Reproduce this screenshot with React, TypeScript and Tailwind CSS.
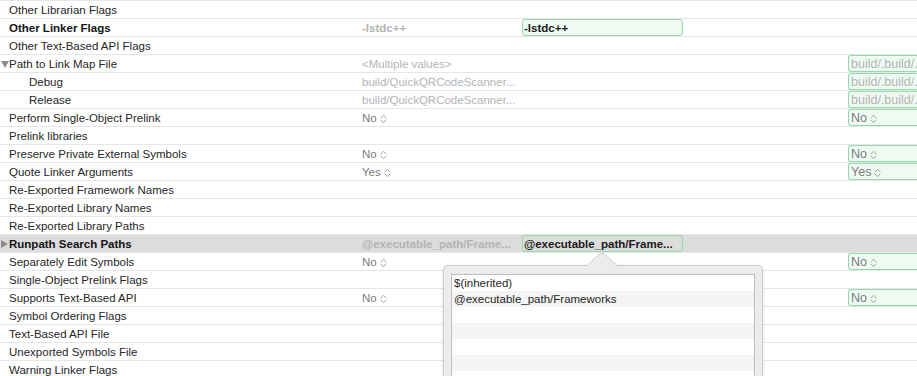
import React from 'react';

type Cell = { text: string; tone?: 'faint' | 'mid' | 'dark'; bold?: boolean; popup?: boolean };

interface Row {
  label: string;
  bold?: boolean;
  indent?: boolean;
  disclosure?: 'open' | 'closed';
  resolved?: Cell;
  target?: Cell;
  project?: Cell;
  selected?: boolean;
}

const rows: Row[] = [
  { label: 'Other Librarian Flags' },
  { label: 'Other Linker Flags', bold: true, resolved: { text: '-lstdc++', tone: 'faint', bold: true }, target: { text: '-lstdc++', tone: 'dark', bold: true } },
  { label: 'Other Text-Based API Flags' },
  { label: 'Path to Link Map File', disclosure: 'open', resolved: { text: '<Multiple values>', tone: 'faint' }, project: { text: 'build/.build/.build/', tone: 'faint' } },
  { label: 'Debug', indent: true, resolved: { text: 'build/QuickQRCodeScanner...', tone: 'faint' }, project: { text: 'build/.build/.build/', tone: 'faint' } },
  { label: 'Release', indent: true, resolved: { text: 'build/QuickQRCodeScanner...', tone: 'faint' }, project: { text: 'build/.build/.build/', tone: 'faint' } },
  { label: 'Perform Single-Object Prelink', resolved: { text: 'No', tone: 'mid', popup: true }, project: { text: 'No', tone: 'mid', popup: true } },
  { label: 'Prelink libraries' },
  { label: 'Preserve Private External Symbols', resolved: { text: 'No', tone: 'mid', popup: true }, project: { text: 'No', tone: 'mid', popup: true } },
  { label: 'Quote Linker Arguments', resolved: { text: 'Yes', tone: 'mid', popup: true }, project: { text: 'Yes', tone: 'mid', popup: true } },
  { label: 'Re-Exported Framework Names' },
  { label: 'Re-Exported Library Names' },
  { label: 'Re-Exported Library Paths' },
  { label: 'Runpath Search Paths', bold: true, disclosure: 'closed', selected: true, resolved: { text: '@executable_path/Frame...', tone: 'faint', bold: true }, target: { text: '@executable_path/Frame...', tone: 'dark', bold: true } },
  { label: 'Separately Edit Symbols', resolved: { text: 'No', tone: 'mid', popup: true }, project: { text: 'No', tone: 'mid', popup: true } },
  { label: 'Single-Object Prelink Flags' },
  { label: 'Supports Text-Based API', resolved: { text: 'No', tone: 'mid', popup: true }, project: { text: 'No', tone: 'mid', popup: true } },
  { label: 'Symbol Ordering Flags' },
  { label: 'Text-Based API File' },
  { label: 'Unexported Symbols File' },
  { label: 'Warning Linker Flags' },
];

const toneClass = {
  faint: 'text-[#b4b4b4]',
  mid: 'text-[#7b7b7b]',
  dark: 'text-[#1a1a1a]',
};

function UpDown({ className = '' }: { className?: string }) {
  return (
    <svg width="7" height="10" viewBox="0 0 7 10" className={className} fill="none" stroke="currentColor" strokeWidth="1" strokeLinecap="round" strokeLinejoin="round">
      <path d="M1 4 L3.5 1.3 L6 4" />
      <path d="M1 6 L3.5 8.7 L6 6" />
    </svg>
  );
}

function Value({ cell }: { cell: Cell }) {
  return (
    <span className={`flex items-center gap-[3px] whitespace-nowrap overflow-hidden ${toneClass[cell.tone ?? 'mid']} ${cell.bold ? 'font-bold' : ''}`}>
      {cell.text}
      {cell.popup && <UpDown className="opacity-70" />}
    </span>
  );
}

function Popover() {
  const stripes = Array.from({ length: 6 });
  return (
    <div className="absolute left-[443px] top-[253px] w-[320px]">
      <svg width="30" height="13" viewBox="0 0 30 13" className="absolute left-[144px] top-0">
        <path d="M0 12.5 L12 1.5 Q15 -1 18 1.5 L30 12.5" fill="#ececec" stroke="#cdcdcd" strokeWidth="1" />
      </svg>
      <div className="mt-[12px] h-[140px] rounded-[5px] border border-[#cdcdcd] bg-[#ececec] px-[7px] pt-[8px] shadow-[0_1px_4px_rgba(0,0,0,0.12)]">
        <div className="border border-[#bdbdbd] bg-white">
          <div className="h-[16px] flex items-center px-[2px] pt-[1px] text-[#1f1f1f]">$(inherited)</div>
          <div className="h-[16px] flex items-center px-[2px] pt-[1px] bg-[#f4f4f4] text-[#1f1f1f]">@executable_path/Frameworks</div>
          {stripes.map((_, i) => (
            <div key={i} className={`h-[16px] ${i % 2 === 1 ? 'bg-[#f4f4f4]' : 'bg-white'}`} />
          ))}
        </div>
      </div>
      {/* cover the seam between arrow and box */}
      <div className="absolute left-[145px] top-[12px] h-[2px] w-[28px] bg-[#ececec]" />
    </div>
  );
}

export default function App() {
  return (
    <div
      className="relative w-[917px] h-[376px] overflow-hidden bg-white text-[11.5px] text-[#262626]"
      style={{ fontFamily: '"Liberation Sans", Arial, sans-serif' }}
    >
      <div className="h-[1px] border-b border-[#e6e6e6]" />
      {rows.map((r) => (
        <div
          key={r.label}
          className={`flex h-[18px] items-stretch border-b border-[#e6e6e6] ${r.selected ? 'bg-[#dcdcdc]' : ''}`}
        >
          <div className={`relative flex w-[362px] shrink-0 items-center pt-[3px] ${r.indent ? 'pl-[29px]' : 'pl-[9px]'} ${r.bold ? 'font-bold text-[#141414]' : ''}`}>
            {r.disclosure === 'open' && (
              <svg width="8" height="7" viewBox="0 0 8 7" className="absolute left-[1px] top-[6px]">
                <path d="M0 0 L8 0 L4 7 Z" fill="#8a8a8a" />
              </svg>
            )}
            {r.disclosure === 'closed' && (
              <svg width="7" height="8" viewBox="0 0 7 8" className="absolute left-[1px] top-[5px]">
                <path d="M0 0 L7 4 L0 8 Z" fill="#8a8a8a" />
              </svg>
            )}
            {r.label}
          </div>
          <div className="flex w-[160px] shrink-0 items-center pt-[3px] pr-[4px]">
            {r.resolved && <Value cell={r.resolved} />}
          </div>
          <div className="flex w-[326px] shrink-0 items-center">
            {r.target && (
              <div className={`flex h-[17px] w-[161px] items-center rounded-[3px] border border-[#93dbac] px-[1px] pt-[2px] ${r.selected ? '' : 'bg-[#eefaf2]'}`}>
                <Value cell={r.target} />
              </div>
            )}
          </div>
          <div className="flex flex-1 items-center">
            {r.project && (
              <div className="flex h-[17px] flex-1 items-center rounded-l-[3px] border border-r-0 border-[#93dbac] bg-[#eefaf2] pl-[2px] pt-[2px] overflow-hidden">
                <span className={`whitespace-nowrap flex items-center gap-[3px] text-[12.5px] ${toneClass[r.project.tone ?? 'mid']}`}>
                  {r.project.text}
                  {r.project.popup && <UpDown className="opacity-70" />}
                </span>
              </div>
            )}
          </div>
        </div>
      ))}
      <Popover />
    </div>
  );
}
